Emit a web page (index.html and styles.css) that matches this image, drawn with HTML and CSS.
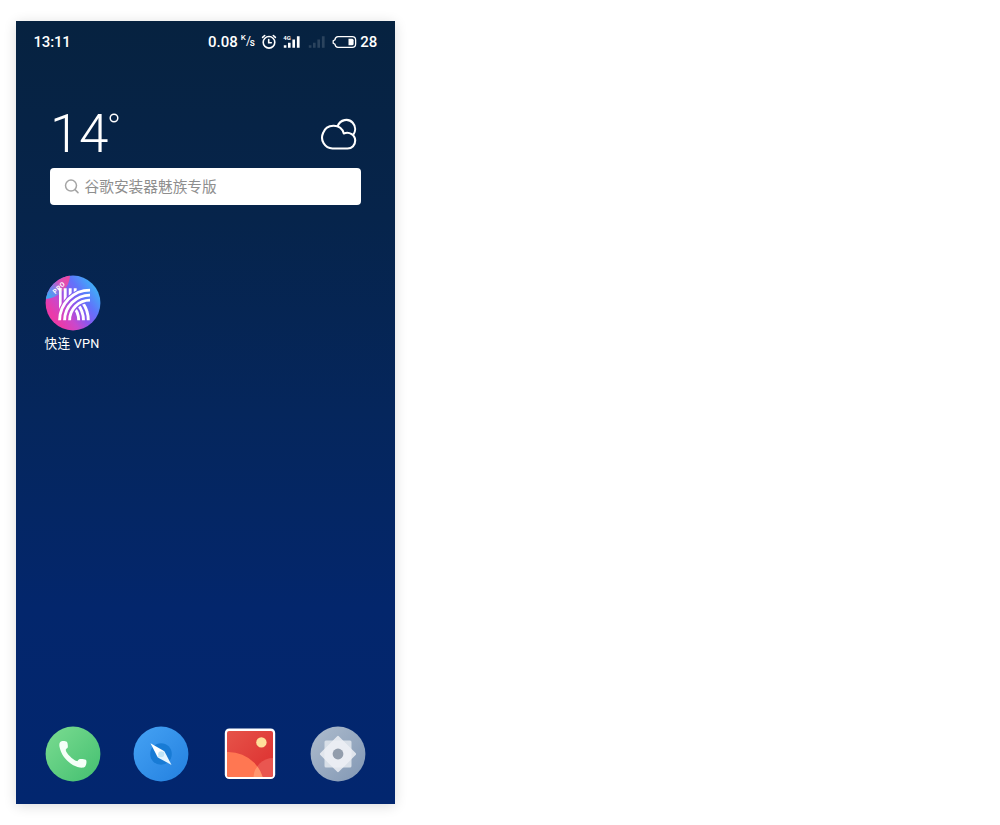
FILE: index.html
```html
<!DOCTYPE html>
<html lang="zh-CN">
<head>
<meta charset="utf-8">
<title>Home screen</title>
<link rel="stylesheet" href="styles.css">
</head>
<body>
<main class="phone">
  <header class="status">
    <span class="time">13:11</span>
    <span class="speed">0.08</span>
    <span class="unit"><span class="unit-top">K</span><span class="unit-slash">/</span><span class="unit-bottom">s</span></span>
    <svg class="alarm" width="16" height="16" viewBox="0 0 16 16" fill="none" stroke="#fff" stroke-width="1.6" stroke-linecap="round">
      <circle cx="8" cy="8.3" r="5.8"/><path d="M1.6 3.4 3.7 1.5M14.4 3.4 12.3 1.5M7.7 5.5V8.7H10.3"/>
    </svg>
    <span class="signal">
      <span class="network">4G</span>
      <svg width="18" height="14" viewBox="0 0 18 14" fill="#fff"><path d="M.8 10.2h2.6v2.6H.8zM5 7.8h2.6v5H5zM9.4 4.5H12v8.3H9.4zM13.9 1.2h2.7v11.6h-2.7z"/></svg>
    </span>
    <svg class="signal-off" width="18" height="14" viewBox="0 0 18 14" fill="#fff"><path d="M.8 10.2h2.6v2.6H.8zM5 7.8h2.6v5H5zM9.4 4.5H12v8.3H9.4zM13.9 1.2h2.7v11.6h-2.7z"/></svg>
    <svg class="battery" width="25" height="14" viewBox="0 0 25 14">
      <path d="M6 1.7H20.2Q23.6 1.7 23.6 5V9Q23.6 12.3 20.2 12.3H6Q3.4 12.3 2.9 9.2L1.2 8.2V5.8L2.9 4.8Q3.4 1.7 6 1.7Z" fill="none" stroke="#fff" stroke-width="1.3"/>
      <path d="M16.5 3.8h3.6q1.5 0 1.5 1.5v3.4q0 1.5-1.5 1.5h-3.6z" fill="#fff"/>
    </svg>
    <span class="level">28</span>
  </header>

  <section class="weather">
    <div class="temp">14<svg class="degree" width="10" height="10" viewBox="0 0 10 10"><circle cx="5" cy="5" r="3.8" fill="none" stroke="#fff" stroke-width="1.5"/></svg></div>
    <svg class="cloud" width="38" height="34" viewBox="0 0 38 34" fill="none" stroke="#fff" stroke-width="2.1" stroke-linejoin="round">
      <path d="M12.5 30.5A10.9 10.9 0 0 1 3.1 15C6.5 5.2 21 5.3 23.8 15.5C29.5 13 35.2 17.3 35.2 22.5C35.2 27.2 32 30.5 27.5 30.5Z"/>
      <path d="M17.6 8.2C20.2 1.3 28.5 0 32.7 4.8C36 8.5 35.7 13.3 33.2 16.9"/>
    </svg>
  </section>

  <div class="search">
    <svg width="16" height="16" viewBox="0 0 16 16" fill="none" stroke="#a5a5a5" stroke-width="1.5" stroke-linecap="round"><circle cx="7" cy="6.6" r="5.5"/><path d="M11 10.6 14 13.6"/></svg>
    <span class="query">谷歌安装器魅族专版</span>
  </div>

  <section class="app">
    <svg width="56" height="56" viewBox="0 0 56 56">
      <defs>
        <linearGradient id="vpn" x1=".1" y1=".78" x2=".9" y2=".2"><stop offset=".08" stop-color="#ea3ba9"/><stop offset=".3" stop-color="#c948cc"/><stop offset=".5" stop-color="#8c57ee"/><stop offset=".72" stop-color="#6074fa"/><stop offset="1" stop-color="#3fb0f8"/></linearGradient>
        <linearGradient id="ribbon" gradientUnits="userSpaceOnUse" x1="2" y1="22" x2="27" y2="3"><stop offset="0" stop-color="#35aef3"/><stop offset=".3" stop-color="#7485ed"/><stop offset=".6" stop-color="#d852b9"/><stop offset="1" stop-color="#f0469d"/></linearGradient>
        <clipPath id="disc"><circle cx="28" cy="28" r="27.4"/></clipPath>
        <clipPath id="mark"><rect x="13" y="13.3" width="32" height="32"/></clipPath>
        <mask id="outside"><path d="M0 0h56v56H0z" fill="#fff"/><circle cx="45" cy="45.5" r="33" fill="#000"/></mask>
        <clipPath id="inside"><circle cx="45" cy="45.5" r="17.6"/></clipPath>
      </defs>
      <g clip-path="url(#disc)">
        <path d="M0 0h56v56H0z" fill="url(#vpn)"/>
        <path d="M0 0H25Q25 9 18 16T0 24Z" fill="url(#ribbon)"/>
        <text class="pro" transform="translate(10.2 19.2) rotate(-43)">PRO</text>
      </g>
      <g clip-path="url(#mark)" fill="none" stroke="#fff" stroke-width="2.9">
        <path mask="url(#outside)" d="M15.2 13V46M20.2 13V46M25.2 13V46M30.2 13V46"/>
        <circle cx="45" cy="45.5" r="30.4"/><circle cx="45" cy="45.5" r="25.4"/><circle cx="45" cy="45.5" r="20.4"/>
        <g clip-path="url(#inside)"><circle cx="13" cy="45.5" r="20.7"/><circle cx="13" cy="45.5" r="25.5"/><circle cx="13" cy="45.5" r="30.3"/></g>
      </g>
    </svg>
    <span class="label">快连 VPN</span>
  </section>

  <nav class="dock">
    <svg width="56" height="56" viewBox="0 0 56 56">
      <defs><linearGradient id="green" x1="0" y1="0" x2="1" y2="1"><stop stop-color="#7bdc91"/><stop offset="1" stop-color="#43bf70"/></linearGradient></defs>
      <circle cx="28" cy="28" r="27.4" fill="url(#green)"/>
      <path d="M16.5 15.2C18.3 14.7 20.6 15 21.8 15.8C22.6 16.4 23 19.7 22.8 21.3C22.6 22.4 20.6 22.8 20.7 24C21.2 27.5 27.8 33.8 31.8 35.1C33.1 35.5 33.2 33.3 34.8 33.1C36.5 32.9 39.6 33.1 40.8 33.8C42.1 34.7 41.4 38.5 40.2 40.6C39 42.2 35.6 42 32.5 41C23.5 38.1 16.2 30 14.5 20.8C14 17.5 14.7 15.9 16.5 15.2Z" fill="#f5fff8"/>
    </svg>
    <svg width="56" height="56" viewBox="0 0 56 56">
      <defs><linearGradient id="blue" x1="0" y1="0" x2="1" y2="1"><stop stop-color="#45a2f4"/><stop offset="1" stop-color="#2380df"/></linearGradient></defs>
      <circle cx="28" cy="28" r="27.4" fill="url(#blue)"/>
      <circle cx="28" cy="28" r="10.8" fill="#187bd5"/>
      <path d="M17.5 17.2 31.4 25.2 24.8 31.4Z" fill="#fff"/><path d="M38.5 38.9 24.8 31.4 31.4 25.2Z" fill="#e5f5ff"/>
      <circle cx="28.2" cy="28.3" r="3" fill="#c0e4f7"/>
    </svg>
    <svg width="56" height="56" viewBox="0 0 56 56">
      <defs>
        <linearGradient id="red" x1="0" y1="0" x2="1" y2="1"><stop stop-color="#e65349"/><stop offset="1" stop-color="#dc2e2e"/></linearGradient>
        <clipPath id="photo"><rect x="5" y="5" width="46" height="46" rx="2"/></clipPath>
      </defs>
      <rect x="2.8" y="2.5" width="50.4" height="50.6" rx="4.5" fill="#fff"/>
      <g clip-path="url(#photo)">
        <path d="M5 5h46v46H5z" fill="url(#red)"/>
        <circle cx="51" cy="51" r="19" fill="#e95650"/>
        <circle cx="6.5" cy="62" r="36" fill="#ff7752"/>
        <path d="M35.4 40.5Q39.2 45.5 40.8 52H31.5Q31.4 45 35.4 40.5Z" fill="#ff966f"/>
        <circle cx="39.4" cy="16.4" r="5.2" fill="#ffe09a"/>
      </g>
    </svg>
    <svg width="56" height="56" viewBox="0 0 56 56">
      <defs><linearGradient id="gray" x1="0" y1="0" x2="1" y2="1"><stop stop-color="#aebccd"/><stop offset="1" stop-color="#8197b4"/></linearGradient></defs>
      <circle cx="28" cy="28" r="27.4" fill="url(#gray)"/>
      <rect x="14.5" y="14.5" width="27" height="27" rx="1.5" fill="#d8dfe8"/>
      <rect x="14.8" y="14.8" width="26.4" height="26.4" rx="1.5" fill="#edf0f5" fill-opacity=".85" transform="rotate(45 28 28)"/>
      <circle cx="28" cy="28" r="5.4" fill="#929dac"/>
    </svg>
  </nav>
</main>
</body>
</html>
```

FILE: styles.css
```css
body {
  box-sizing: border-box;
  min-height: 825px;
  margin: 0;
  padding: 21px 0 0 16px;
  background: #fff;
  color: #fff;
  font-family: Roboto, "Noto Sans CJK SC", sans-serif;
}
svg { display: block; flex: none; }
.phone {
  box-sizing: border-box;
  display: flex;
  flex-direction: column;
  width: 379px;
  height: 783px;
  background: linear-gradient(#062240 0%, #06244b 25%, #05265c 50%, #03266c 75%, #02266f 100%);
  box-shadow: 0 2px 12px rgba(0, 0, 0, .14);
}
.status {
  display: flex;
  align-items: center;
  height: 41px;
  padding: 0 18px 0 17.5px;
  font-size: 15px;
  font-weight: 500;
  line-height: 20px;
}
.time { flex: 1; letter-spacing: -.2px; }
.level { letter-spacing: -.2px; }
.unit { display: flex; width: 14px; margin: 0 6.5px 0 3px; font-size: 10px; line-height: 12px; }
.unit-top { margin-top: -3px; font-size: 8px; }
.unit-slash { margin-right: -1px; font-size: 12px; font-weight: 400; }
.unit-bottom { margin-top: 2px; }
.signal { position: relative; margin: 0 7px 0 6px; }
.network { position: absolute; top: -1px; left: 0; font-size: 6px; line-height: 8px; font-weight: 700; }
.signal-off { margin-right: 6px; opacity: .15; }
.battery { margin-right: 3px; }
.weather {
  display: flex;
  align-items: flex-start;
  justify-content: space-between;
  height: 74px;
  margin-top: 32px;
  padding: 0 37px 0 34px;
}
.temp { display: flex; font-size: 53px; font-weight: 300; line-height: 81px; letter-spacing: -.4px; }
.degree { margin: 18.5px 0 0 1px; }
.cloud { margin-top: 23.5px; }
.search {
  box-sizing: border-box;
  display: flex;
  align-items: center;
  gap: 4.5px;
  height: 37px;
  margin: 0 34px;
  padding-left: 14px;
  border-radius: 4px;
  background: #fff;
  color: #8e8e8e;
  font-size: 14.7px;
}
.query { padding-bottom: 2px; }
.app {
  display: flex;
  flex-direction: column;
  align-items: center;
  width: 56px;
  margin: 70px 0 0 28.5px;
}
.pro { fill: #fff; font-size: 6.5px; font-weight: 700; letter-spacing: .5px; }
.label { margin: 3px 1px 0 0; font-size: 12.7px; letter-spacing: .2px; line-height: 19px; white-space: nowrap; }
.dock {
  display: flex;
  justify-content: space-between;
  margin-top: auto;
  padding: 0 29px 22.5px 28.5px;
}
```
